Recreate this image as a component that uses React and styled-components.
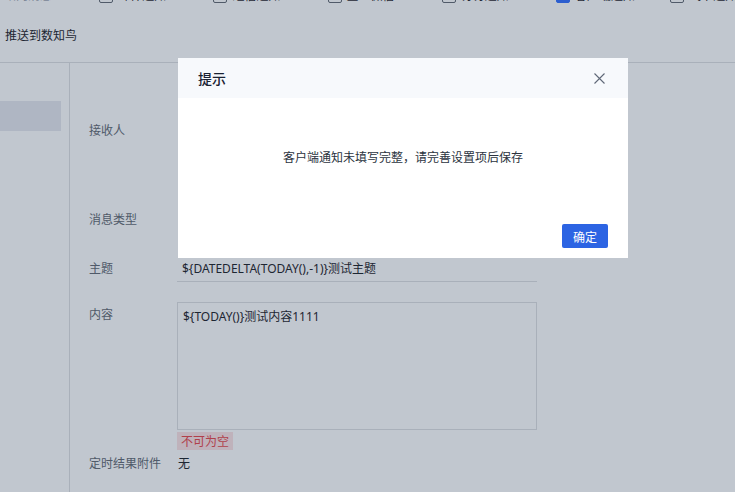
import styled, { createGlobalStyle } from 'styled-components';

const GlobalStyle = createGlobalStyle`
  html, body {
    margin: 0;
    padding: 0;
    background: #fff;
    overflow: hidden;
  }
  body {
    font-family: "Noto Sans", "Noto Sans CJK SC", sans-serif;
    font-size: 12px;
    color: #1f2329;
  }
  * {
    box-sizing: border-box;
  }
`;

const Page = styled.div`
  width: 735px;
  height: 492px;
  display: flex;
  flex-direction: column;
  overflow: hidden;
`;

const ChannelRow = styled.div`
  display: flex;
  margin: -11px 0 0 -15px;
  height: 14px;
  flex: none;
`;

const Channel = styled.label`
  width: 114.2px;
  flex: none;
  display: flex;
  align-items: center;
  gap: 5px;
  color: ${({ muted }) => (muted ? '#a0a6b2' : '#1f2329')};
  line-height: 14px;
  white-space: nowrap;
`;

const Box = styled.span`
  width: 14px;
  height: 14px;
  border-radius: 2px;
  border: 1px solid ${({ checked }) => (checked ? '#3370ff' : '#646a73')};
  background: ${({ checked }) => (checked ? '#3370ff' : '#fff')};
  flex: none;
`;

const PushTitle = styled.div`
  padding: 25px 0 0 5px;
  height: 59px;
  flex: none;
  line-height: 14px;
  font-family: "Noto Sans CJK SC", sans-serif;
  color: #1f2329;
`;

const Body = styled.div`
  flex: 1;
  display: flex;
  border-top: 1px solid #dee0e3;
`;

const Sidebar = styled.div`
  width: 70px;
  flex: none;
  border-right: 1px solid #dee0e3;
  padding: 38px 8px 0 0;
`;

const NavItem = styled.div`
  height: 30px;
  background: ${({ active }) => (active ? '#e6e8ef' : 'transparent')};
`;

const Main = styled.div`
  flex: 1;
  padding: 57px 0 0 19px;
  display: flex;
  flex-direction: column;
`;

const Row = styled.div`
  display: flex;
  align-items: flex-start;
  min-height: ${({ h }) => h ?? 20}px;
  margin-top: ${({ gap }) => gap ?? 0}px;
`;

const Label = styled.div`
  width: 88px;
  flex: none;
  line-height: 20px;
  margin-top: ${({ top }) => top ?? 0}px;
  color: #646a73;
  font-family: "Noto Sans CJK SC", sans-serif;
  white-space: nowrap;
`;

const SubjectInput = styled.input`
  width: 360px;
  height: 24px;
  border: none;
  border-bottom: 1px solid #dee0e3;
  padding: 0 5px 3px;
  font: inherit;
  font-size: 12px;
  color: #1f2329;
  background: transparent;
  outline: none;
`;

const Field = styled.div`
  display: flex;
  flex-direction: column;
  align-items: flex-start;
`;

const ContentArea = styled.textarea`
  width: 360px;
  height: 128px;
  border: 1px solid #dee0e3;
  padding: 4px 5px;
  line-height: 18px;
  font: inherit;
  font-size: 12px;
  color: #1f2329;
  resize: none;
  outline: none;
  background: #fff;
`;

const ErrorTag = styled.span`
  margin-top: 2px;
  height: 18px;
  padding: 0 4px;
  line-height: 18px;
  background: #fde2e4;
  color: #e8474a;
  font-family: "Noto Sans CJK SC", sans-serif;
`;

const Value = styled.div`
  line-height: 20px;
  padding-left: 1px;
  font-family: "Noto Sans CJK SC", sans-serif;
`;

const Overlay = styled.div`
  position: fixed;
  inset: 0;
  background: rgba(25, 47, 76, 0.27);
  padding: 58px 0 0 178px;
`;

const Dialog = styled.div`
  width: 450px;
  background: #fff;
  display: flex;
  flex-direction: column;
`;

const DialogHeader = styled.div`
  height: 40px;
  background: #f7f9fc;
  display: flex;
  align-items: center;
  justify-content: space-between;
  padding: 0 23px 0 20px;
`;

const DialogTitle = styled.div`
  font-size: 14px;
  font-weight: 500;
  color: #1a2233;
  font-family: "Noto Sans CJK SC", sans-serif;
`;

const CloseButton = styled.button`
  border: none;
  background: none;
  padding: 0;
  display: flex;
  color: #5f6877;
  cursor: pointer;
`;

const DialogBody = styled.div`
  height: 116px;
  display: flex;
  align-items: center;
  justify-content: center;
  color: #2b3340;
  font-family: "Noto Sans CJK SC", sans-serif;
`;

const DialogFooter = styled.div`
  display: flex;
  justify-content: flex-end;
  padding: 10px 20px;
`;

const PrimaryButton = styled.button`
  width: 46px;
  height: 24px;
  border: none;
  border-radius: 2px;
  background: #2c64e3;
  color: #fff;
  font-size: 12px;
  font-family: "Noto Sans CJK SC", sans-serif;
  cursor: pointer;
`;

const channels = [
  { name: '站内消息', muted: true },
  { name: '邮件通知' },
  { name: '短信通知' },
  { name: '企业微信' },
  { name: '钉钉通知' },
  { name: '客户端通知', checked: true },
  { name: '飞书通知' },
];

const App = () => (
  <>
    <GlobalStyle />
    <Page>
      <ChannelRow>
        {channels.map((c) => (
          <Channel key={c.name} muted={c.muted}>
            <Box checked={c.checked} />
            {c.name}
          </Channel>
        ))}
      </ChannelRow>
      <PushTitle>推送到数知鸟</PushTitle>
      <Body>
        <Sidebar>
          <NavItem active />
        </Sidebar>
        <Main>
          <Row h={89}>
            <Label>接收人</Label>
          </Row>
          <Row h={49}>
            <Label>消息类型</Label>
          </Row>
          <Row h={44}>
            <Label>主题</Label>
            <SubjectInput readOnly value="${DATEDELTA(TODAY(),-1)}测试主题" />
          </Row>
          <Row>
            <Label top={2}>内容</Label>
            <Field>
              <ContentArea readOnly value="${TODAY()}测试内容1111" />
              <ErrorTag>不可为空</ErrorTag>
            </Field>
          </Row>
          <Row gap={3}>
            <Label>定时结果附件</Label>
            <Value>无</Value>
          </Row>
        </Main>
      </Body>
      <Overlay>
        <Dialog>
          <DialogHeader>
            <DialogTitle>提示</DialogTitle>
            <CloseButton aria-label="关闭">
              <svg width="11" height="11" viewBox="0 0 11 11">
                <path d="M0.5 0.5 L10.5 10.5 M10.5 0.5 L0.5 10.5" stroke="currentColor" strokeWidth="1.1" />
              </svg>
            </CloseButton>
          </DialogHeader>
          <DialogBody>客户端通知未填写完整，请完善设置项后保存</DialogBody>
          <DialogFooter>
            <PrimaryButton>确定</PrimaryButton>
          </DialogFooter>
        </Dialog>
      </Overlay>
    </Page>
  </>
);

export default App;
